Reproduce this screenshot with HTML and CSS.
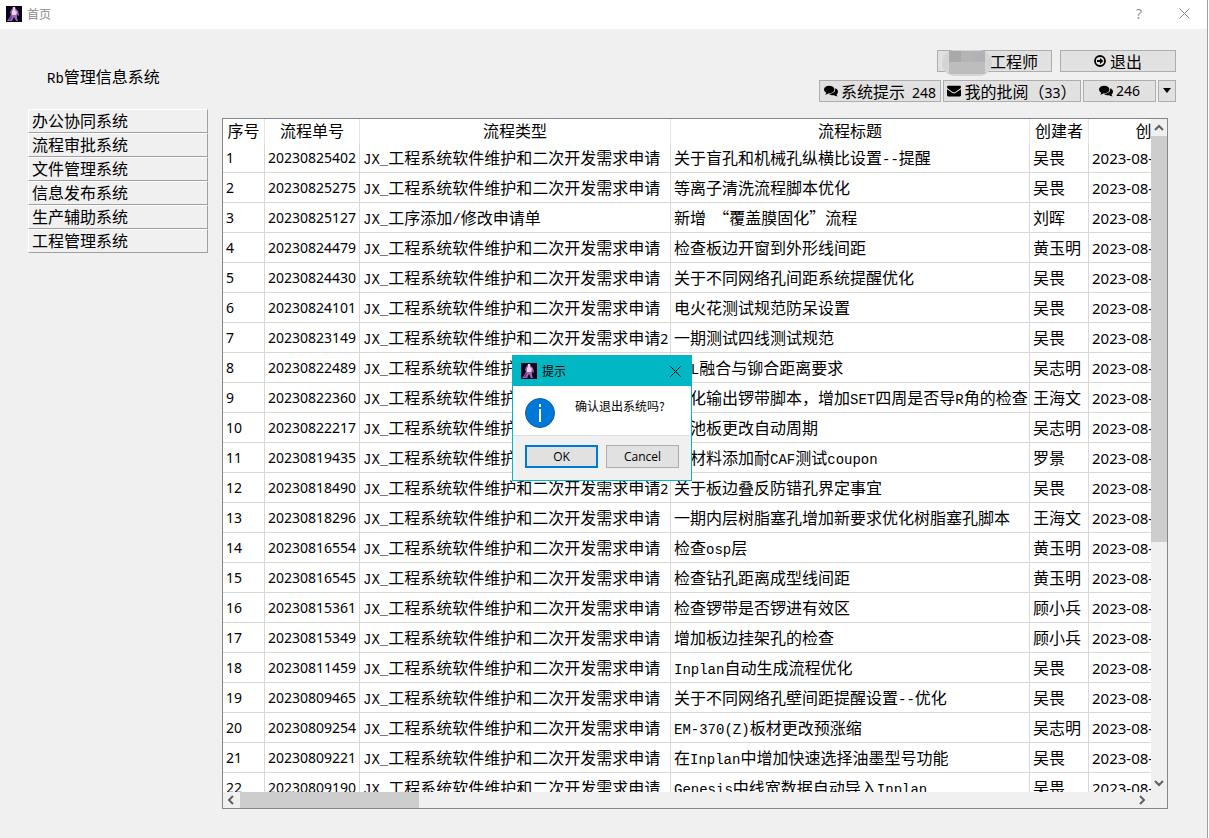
FILE: index.html
```html
<!DOCTYPE html>
<html lang="zh-CN">
<head>
<meta charset="utf-8">
<title>首页</title>
<link rel="stylesheet" href="styles.css">
</head>
<body>
<svg class="defs" aria-hidden="true">
  <symbol id="figure" viewBox="0 0 16 16">
    <rect width="16" height="16" fill="#07031a"/>
    <path d="M7 1h2l1 2 2 2 1 4-1 1-1-2v4l1 3h-2L8 11l-2 4H1l3-4 1-3-1-1 1-3 1-1z" fill="#9a68ac"/>
    <path d="M7 1h2v3l2 2-1 3H6V5l1-1z" fill="#f0cfe6"/>
    <path d="M6 10l-1 4H2l3-4zM9 10l2 4" fill="#7a35c0"/>
  </symbol>
  <symbol id="chat" viewBox="0 0 14 12">
    <ellipse cx="5.2" cy="4.6" rx="5.2" ry="3.9"/>
    <path d="M2.2 6.5v1.2c0 .8-.6 1.300-1.200 1.800 1.500 0 2.600-.5 3.500-1.300z"/>
    <path d="M11 3.200c1.800.6 3 1.900 3 3.500 0 1.100-.6 2-1.500 2.700.1.900.6 1.400 1.200 2-1.500 0-2.700-.5-3.500-1.200-2.100.2-4.100-.3-5.200-1.300C8.500 8.900 11.200 6.800 11.200 4.500c0-.5 0-.9-.2-1.300z"/>
  </symbol>
  <symbol id="mail" viewBox="0 0 14 12">
    <path d="M1.200.8h11.600c.7 0 1.200.5 1.200 1.100 0 .8-.6 1.500-1.200 1.900L8.300 6.900c-.9.600-1.700.6-2.600 0L1.200 3.800C.6 3.400 0 2.700 0 2 0 1.200.5.8 1.200.8z"/>
    <path d="M0 4.300l5.200 3.500c1.300.8 2.300.8 3.600 0L14 4.300v5.900c0 .7-.5 1.200-1.200 1.200H1.200C.5 11.400 0 10.900 0 10.200z"/>
  </symbol>
  <symbol id="exit" viewBox="0 0 12 12">
    <circle cx="6" cy="6" r="5" fill="none" stroke="#000" stroke-width="1.800"/>
    <path d="M3 5.100h3V3l3.300 3L6 9V6.900H3z"/>
  </symbol>
</svg>
<div class="window">
  <header class="titlebar">
    <svg class="logo" aria-hidden="true"><use href="#figure"/></svg>
    <span class="caption">首页</span>
    <button class="chrome" type="button" aria-label="帮助">?</button>
    <button class="chrome" type="button" aria-label="关闭"><svg width="11" height="11" viewBox="0 0 11 11"><path d="M.5.5l10 10M10.500.5l-10 10" fill="none" stroke="#8c8c8c"/></svg></button>
  </header>
  <main class="content">
    <aside class="sidebar">
      <h1 class="brand"><span class="mono">Rb</span>管理信息系统</h1>
      <nav class="menu">
        <button type="button">办公协同系统</button>
        <button type="button">流程审批系统</button>
        <button type="button">文件管理系统</button>
        <button type="button">信息发布系统</button>
        <button type="button">生产辅助系统</button>
        <button type="button">工程管理系统</button>
      </nav>
    </aside>
    <section class="work">
      <div class="tools">
        <button class="tool user" type="button"><svg class="mosaic" viewBox="0 0 50 26" aria-hidden="true"><rect width="50" height="26" rx="13" fill="#d5d5d5"/><path fill="#a9a9a9" d="M7 1h12v11H7z"/><path fill="#b5b3b3" d="M19 1h12v11H19z"/><path fill="#b1b2b6" d="M31 1h12v11H31z"/><path fill="#bdbdbd" d="M7 12h36v12H7z"/></svg><span>工程师</span></button>
        <button class="tool leave" type="button"><svg width="12" height="12"><use href="#exit"/></svg><span>退出</span></button>
      </div>
      <div class="tools second">
        <button class="tool tips" type="button"><svg width="14" height="12"><use href="#chat"/></svg><span>系统提示&nbsp; <span class="num">248</span></span></button>
        <button class="tool review" type="button"><svg width="14" height="12"><use href="#mail"/></svg><span>我的批阅（<span class="num">33</span>）</span></button>
        <button class="tool count" type="button"><svg width="14" height="12"><use href="#chat"/></svg><span class="num">246</span></button>
        <button class="tool more" type="button" aria-label="更多"><svg width="8" height="5"><path d="M0 0h8L4 5z"/></svg></button>
      </div>
      <div class="grid">
        <div class="view">
          <table>
            <colgroup><col class="c1"><col class="c2"><col class="c3"><col class="c4"><col class="c5"><col class="c6"></colgroup>
            <thead><tr><th>序号</th><th>流程单号</th><th>流程类型</th><th>流程标题</th><th>创建者</th><th>创建时间</th></tr></thead>
            <tbody>
<tr><td>1</td><td>20230825402</td><td><span class="mono">JX_</span>工程系统软件维护和二次开发需求申请</td><td>关于盲孔和机械孔纵横比设置<span class="mono">--</span>提醒</td><td>吴畏</td><td>2023-08-25</td></tr>
<tr><td>2</td><td>20230825275</td><td><span class="mono">JX_</span>工程系统软件维护和二次开发需求申请</td><td>等离子清洗流程脚本优化</td><td>吴畏</td><td>2023-08-25</td></tr>
<tr><td>3</td><td>20230825127</td><td><span class="mono">JX_</span>工序添加<span class="mono">/</span>修改申请单</td><td>新增&nbsp; “覆盖膜固化”流程</td><td>刘晖</td><td>2023-08-25</td></tr>
<tr><td>4</td><td>20230824479</td><td><span class="mono">JX_</span>工程系统软件维护和二次开发需求申请</td><td>检查板边开窗到外形线间距</td><td>黄玉明</td><td>2023-08-24</td></tr>
<tr><td>5</td><td>20230824430</td><td><span class="mono">JX_</span>工程系统软件维护和二次开发需求申请</td><td>关于不同网络孔间距系统提醒优化</td><td>吴畏</td><td>2023-08-24</td></tr>
<tr><td>6</td><td>20230824101</td><td><span class="mono">JX_</span>工程系统软件维护和二次开发需求申请</td><td>电火花测试规范防呆设置</td><td>吴畏</td><td>2023-08-24</td></tr>
<tr><td>7</td><td>20230823149</td><td><span class="mono">JX_</span>工程系统软件维护和二次开发需求申请<span class="num">2</span></td><td>一期测试四线测试规范</td><td>吴畏</td><td>2023-08-23</td></tr>
<tr><td>8</td><td>20230822489</td><td><span class="mono">JX_</span>工程系统软件维护和二次开发需求申请</td><td><span class="mono">PNL</span>融合与铆合距离要求</td><td>吴志明</td><td>2023-08-22</td></tr>
<tr><td>9</td><td>20230822360</td><td><span class="mono">JX_</span>工程系统软件维护和二次开发需求申请</td><td>优化输出锣带脚本，增加<span class="mono">SET</span>四周是否导<span class="mono">R</span>角的检查</td><td>王海文</td><td>2023-08-22</td></tr>
<tr><td>10</td><td>20230822217</td><td><span class="mono">JX_</span>工程系统软件维护和二次开发需求申请</td><td>电池板更改自动周期</td><td>吴志明</td><td>2023-08-22</td></tr>
<tr><td>11</td><td>20230819435</td><td><span class="mono">JX_</span>工程系统软件维护和二次开发需求申请</td><td>新材料添加耐<span class="mono">CAF</span>测试<span class="mono">coupon</span></td><td>罗景</td><td>2023-08-19</td></tr>
<tr><td>12</td><td>20230818490</td><td><span class="mono">JX_</span>工程系统软件维护和二次开发需求申请<span class="num">2</span></td><td>关于板边叠反防错孔界定事宜</td><td>吴畏</td><td>2023-08-18</td></tr>
<tr><td>13</td><td>20230818296</td><td><span class="mono">JX_</span>工程系统软件维护和二次开发需求申请</td><td>一期内层树脂塞孔增加新要求优化树脂塞孔脚本</td><td>王海文</td><td>2023-08-18</td></tr>
<tr><td>14</td><td>20230816554</td><td><span class="mono">JX_</span>工程系统软件维护和二次开发需求申请</td><td>检查<span class="mono">osp</span>层</td><td>黄玉明</td><td>2023-08-16</td></tr>
<tr><td>15</td><td>20230816545</td><td><span class="mono">JX_</span>工程系统软件维护和二次开发需求申请</td><td>检查钻孔距离成型线间距</td><td>黄玉明</td><td>2023-08-16</td></tr>
<tr><td>16</td><td>20230815361</td><td><span class="mono">JX_</span>工程系统软件维护和二次开发需求申请</td><td>检查锣带是否锣进有效区</td><td>顾小兵</td><td>2023-08-15</td></tr>
<tr><td>17</td><td>20230815349</td><td><span class="mono">JX_</span>工程系统软件维护和二次开发需求申请</td><td>增加板边挂架孔的检查</td><td>顾小兵</td><td>2023-08-15</td></tr>
<tr><td>18</td><td>20230811459</td><td><span class="mono">JX_</span>工程系统软件维护和二次开发需求申请</td><td><span class="mono">Inplan</span>自动生成流程优化</td><td>吴畏</td><td>2023-08-11</td></tr>
<tr><td>19</td><td>20230809465</td><td><span class="mono">JX_</span>工程系统软件维护和二次开发需求申请</td><td>关于不同网络孔壁间距提醒设置<span class="mono">--</span>优化</td><td>吴畏</td><td>2023-08-09</td></tr>
<tr><td>20</td><td>20230809254</td><td><span class="mono">JX_</span>工程系统软件维护和二次开发需求申请</td><td><span class="mono">EM-370(Z)</span>板材更改预涨缩</td><td>吴志明</td><td>2023-08-09</td></tr>
<tr><td>21</td><td>20230809221</td><td><span class="mono">JX_</span>工程系统软件维护和二次开发需求申请</td><td>在<span class="mono">Inplan</span>中增加快速选择油墨型号功能</td><td>吴畏</td><td>2023-08-09</td></tr>
<tr><td>22</td><td>20230809190</td><td><span class="mono">JX_</span>工程系统软件维护和二次开发需求申请</td><td><span class="mono">Genesis</span>中线宽数据自动导入<span class="mono">Inplan</span></td><td>吴畏</td><td>2023-08-09</td></tr>
            </tbody>
          </table>
        </div>
        <div class="vbar">
          <svg class="arrow" viewBox="0 0 16 17"><path d="M4 11l4-4 4 4"/></svg>
          <div class="track"><div class="thumb"></div></div>
          <svg class="arrow" viewBox="0 0 16 17"><path d="M4 6l4 4 4-4"/></svg>
        </div>
        <div class="hbar">
          <svg class="arrow" viewBox="0 0 17 16"><path d="M10 4L6 8l4 4"/></svg>
          <div class="track"><div class="thumb"></div></div>
          <svg class="arrow" viewBox="0 0 17 16"><path d="M6 4l4 4-4 4"/></svg>
        </div>
      </div>
    </section>
  </main>
  <div class="overlay">
    <div class="dialog" role="dialog" aria-labelledby="dialog-title">
      <div class="dialog-bar">
        <svg class="logo" aria-hidden="true"><use href="#figure"/></svg>
        <span class="dialog-title" id="dialog-title">提示</span>
        <button class="dialog-close" type="button" aria-label="关闭"><svg width="11" height="11" viewBox="0 0 11 11"><path d="M.5.5l10 10M10.500.5l-10 10" fill="none" stroke="#000"/></svg></button>
      </div>
      <div class="dialog-body">
        <svg width="30" height="30" viewBox="0 0 30 30" aria-hidden="true"><circle cx="15" cy="15" r="14.500" fill="#0078d7" stroke="#0a5ea8"/><path d="M14 11h2v13h-2zM14 6h2v3h-2z" fill="#fff"/></svg>
        <p>确认退出系统吗?</p>
      </div>
      <div class="dialog-foot">
        <button class="answer primary" type="button">OK</button>
        <button class="answer" type="button">Cancel</button>
      </div>
    </div>
  </div>
</div>
</body>
</html>
```
FILE: styles.css
```css
* { box-sizing: border-box; }

body {
  margin: 0;
  padding-right: 1px;
  height: 100vh;
  overflow: hidden;
  background: #fff;
  color: #000;
  font: 16px/20px "Noto Sans CJK SC", sans-serif;
}

button {
  margin: 0;
  padding: 0;
  border: 0;
  background: none;
  color: inherit;
  font: inherit;
}

.defs { position: absolute; width: 0; height: 0; }
.mono { font-family: "Liberation Mono", monospace; font-size: 14px; line-height: 14px; }
.num { font-family: "Noto Sans", sans-serif; font-size: 14px; line-height: 14px; }
.logo { width: 16px; height: 16px; flex: none; }

.window {
  position: relative;
  display: flex;
  flex-direction: column;
  height: 100%;
  border-right: 1px solid #a0a0a0;
  background: #f0f0f0;
}

.titlebar {
  display: flex;
  align-items: center;
  flex: none;
  height: 29px;
  padding: 0 6px 2px;
  background: #fff;
}
.caption { flex: 1; margin-left: 5px; color: #8c8c8c; font-size: 12px; }
.chrome {
  display: flex;
  align-items: center;
  justify-content: center;
  width: 34px;
  height: 26px;
  margin-left: 11px;
  color: #8c8c8c;
  font: 14px/20px "Open Sans", sans-serif;
}

.content {
  flex: 1;
  min-height: 0;
  display: grid;
  grid-template-columns: 180px minmax(0, 1fr);
  column-gap: 14px;
  padding: 21px 31px 29px 28px;
}

.brand {
  margin: 16px 0 23px 19px;
  font-size: 16px;
  font-weight: 400;
  line-height: 20px;
}
.menu { display: flex; flex-direction: column; }
.menu button {
  height: 24px;
  padding: 0 0 2px 3px;
  border: 1px solid;
  border-color: #fff #a0a0a0 #a0a0a0 #fff;
  text-align: left;
  line-height: 20px;
}

.work { display: flex; flex-direction: column; min-height: 0; }
.tools { display: flex; justify-content: flex-end; gap: 8px; margin-bottom: 8px; }
.second { gap: 2px; margin-bottom: 16px; }
.tool {
  position: relative;
  display: flex;
  align-items: center;
  justify-content: center;
  gap: 3px;
  height: 22px;
  padding-bottom: 1px;
  border: 1px solid #adadad;
  background: #e1e1e1;
  white-space: nowrap;
}
.user { width: 115px; justify-content: flex-end; padding-right: 13px; }
.leave { width: 116px; gap: 4px; }
.tips { width: 122px; }
.review { width: 138px; }
.count { width: 73px; }
.more { width: 18px; }
.mosaic { position: absolute; left: 4px; top: -1px; width: 50px; height: 26px; }

.grid {
  flex: 1;
  min-height: 0;
  display: grid;
  grid-template-columns: minmax(0, 1fr) 16px;
  grid-template-rows: minmax(0, 1fr) 16px;
  margin-right: 8px;
  border: 1px solid #828790;
  background: #f0f0f0;
}
.view { overflow: hidden; background: #fff; }

table { width: 1024px; table-layout: fixed; border-collapse: separate; border-spacing: 0; }
.c1 { width: 42px; }
.c2 { width: 95px; }
.c3 { width: 311px; }
.c4 { width: 359px; }
.c5 { width: 59px; }
.c6 { width: 158px; }
th {
  height: 24px;
  padding: 0 0 2px;
  border-right: 1px solid #e5e5e5;
  font-weight: 400;
  white-space: nowrap;
}
td {
  height: 30px;
  padding: 0 0 2px 3px;
  border-right: 1px solid #d8d8d8;
  border-bottom: 1px solid #d8d8d8;
  white-space: nowrap;
}
td:nth-child(1), td:nth-child(2), td:nth-child(6) {
  padding-bottom: 0;
  font-family: "Noto Sans", sans-serif;
  font-size: 14px;
}
td:nth-child(6) { font-size: 15px; }

.arrow { fill: none; stroke: #606060; stroke-width: 2; flex: none; }
.track { flex: 1; display: flex; }
.thumb { background: #cdcdcd; }
.vbar { display: flex; flex-direction: column; }
.vbar .arrow { width: 16px; height: 17px; }
.vbar .track { flex-direction: column; }
.vbar .thumb { height: 63.6%; }
.hbar { display: flex; }
.hbar .arrow { width: 17px; height: 16px; }
.hbar .thumb { width: 20%; }

.overlay {
  position: absolute;
  inset: 0;
  display: flex;
  align-items: center;
  justify-content: center;
  padding: 0 3px 2px 0;
}
.dialog {
  width: 180px;
  border: 1px solid #00b7c3;
  background: #fff;
  font-size: 12px;
}
.dialog-bar {
  display: flex;
  align-items: center;
  height: 30px;
  padding: 0 10px 0 8px;
  background: #00b7c3;
}
.dialog-title { flex: 1; margin-left: 5px; }
.dialog-close { display: flex; }
.dialog-body {
  display: flex;
  gap: 20px;
  height: 49px;
  padding: 12px 12px 0;
}
.dialog-body svg { flex: none; }
.dialog-body p { margin: 0; line-height: 16px; white-space: nowrap; }
.dialog-foot {
  display: flex;
  gap: 8px;
  padding: 9px 12px 12px;
  border-top: 1px solid #dfdfdf;
  background: #f0f0f0;
}
.answer {
  width: 73px;
  height: 23px;
  border: 1px solid #adadad;
  background: #e1e1e1;
  font: 12px/16px "Open Sans", sans-serif;
}
.primary { border: 2px solid #0078d7; }
```
